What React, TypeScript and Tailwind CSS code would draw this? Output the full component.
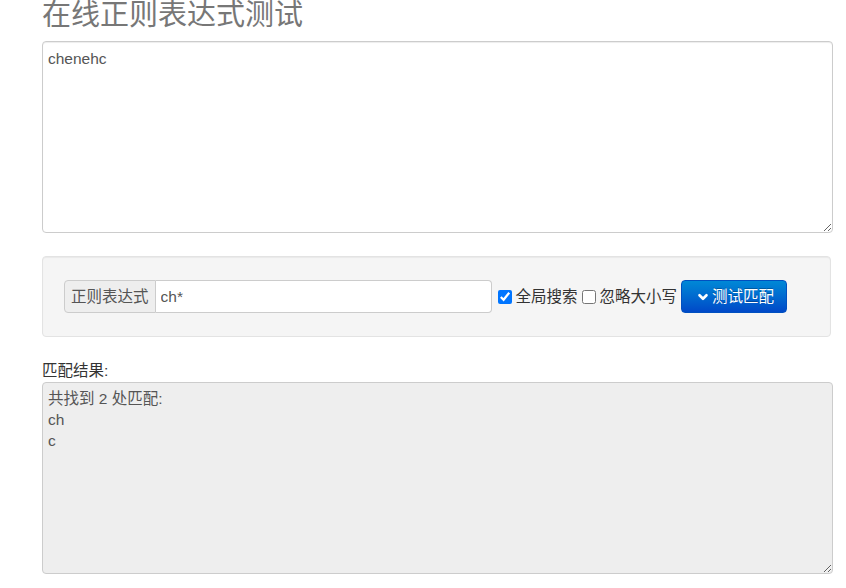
import { ChevronDown } from 'lucide-react';

const font = { fontFamily: '"Liberation Sans", Arial, "Noto Sans CJK SC", sans-serif' };

export default function App() {
  return (
    <div className="min-h-screen bg-white text-[15.5px] leading-[21px] text-[#333]" style={font}>
      <div className="ml-[42px] w-[791px]">
        {/* Title */}
        <h1 className="text-[29px] leading-[32px] text-[#777] font-normal -mt-[1px] mb-[10px]">在线正则表达式测试</h1>

        {/* Source text */}
        <textarea
          className="block w-full h-[192px] border border-[#ccc] rounded-[4px] px-[5px] py-[6px] text-[#555] shadow-[inset_0_1px_1px_rgba(0,0,0,0.075)] outline-none resize-y"
          defaultValue="chenehc"
        />

        {/* Regex panel */}
        <div className="mt-[23px] w-[789px] h-[81px] bg-[#f5f5f5] border border-[#e3e3e3] rounded-[4px] shadow-[inset_0_1px_1px_rgba(0,0,0,0.05)] pl-[21px] pt-[23px]">
          <div className="flex items-center">
            <div className="flex h-[33px]">
              <span className="flex items-center h-full px-[6px] bg-[#eee] border border-[#ccc] rounded-l-[4px] text-[#555]">正则表达式</span>
              <input
                className="h-full w-[336px] border border-l-0 border-[#ccc] rounded-r-[4px] bg-white px-[5px] text-[#555] outline-none"
                defaultValue="ch*"
              />
            </div>
            <label className="flex items-center ml-[6px]">
              <input type="checkbox" defaultChecked className="w-[14px] h-[14px] m-0" />
              <span className="ml-[4px]">全局搜索</span>
            </label>
            <label className="flex items-center ml-[4px]">
              <input type="checkbox" className="w-[14px] h-[14px] m-0" />
              <span className="ml-[4px]">忽略大小写</span>
            </label>
            <button className="ml-[4px] flex items-center h-[33px] w-[106px] pl-[14px] rounded-[4px] border border-[#0050c0] bg-gradient-to-b from-[#0088d6] to-[#0048c8] text-white [text-shadow:0_-1px_0_rgba(0,0,0,0.25)]">
              <ChevronDown size={14} strokeWidth={4.5} className="mr-[2px]" />
              测试匹配
            </button>
          </div>
        </div>

        {/* Result */}
        <div className="mt-[23px] leading-[22px]">匹配结果:</div>
        <textarea
          readOnly
          className="block w-full h-[192px] border border-[#ccc] rounded-[4px] px-[5px] py-[5px] bg-[#eee] text-[#555] outline-none resize-y"
          defaultValue={'共找到 2 处匹配:\nch\nc'}
        />
      </div>
    </div>
  );
}
